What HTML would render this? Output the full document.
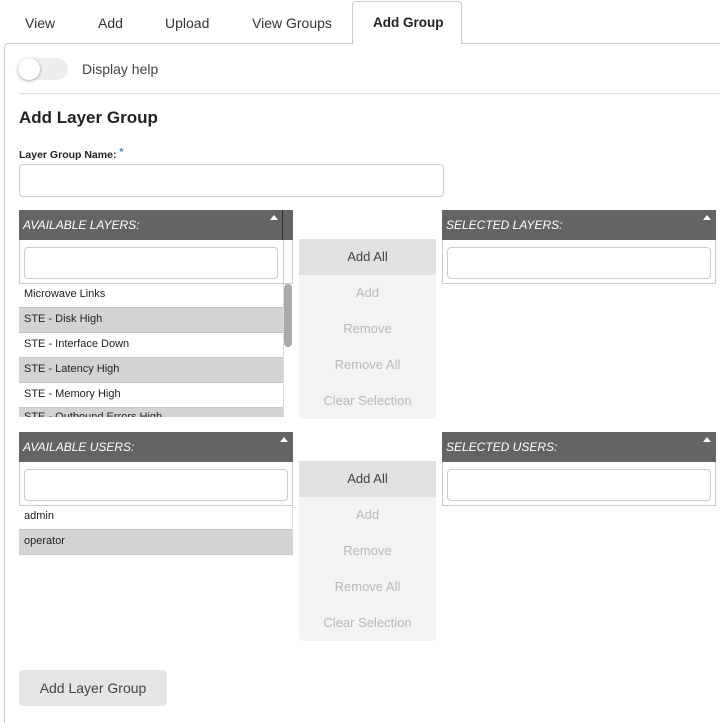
<!DOCTYPE html>
<html><head><style>
*{box-sizing:border-box;margin:0;padding:0}
body{width:720px;height:709px;background:#fff;font-family:"Liberation Sans",sans-serif;position:relative;overflow:hidden;color:#333}
.a{position:absolute}
.tab{position:absolute;top:15px;font-size:14px;color:#333}
.hdr{position:absolute;background:#646464;color:#fff;font-style:italic;font-size:12px;padding:8px 4px;height:31px}
.tri{position:absolute;top:5px;width:0;height:0;border-left:4px solid transparent;border-right:4px solid transparent;border-bottom:5px solid #fff}
.box{position:absolute;border:1px solid #ccc;border-top:none;background:#fff}
.inp{position:absolute;border:1px solid #ccc;border-radius:4px;background:#fff}
.item{position:absolute;left:19px;width:264px;height:25px;font-size:11px;padding:5px 5px;border-bottom:1px solid #c8c8c8;color:#222}
.g{background:#d3d3d3}
.btns{position:absolute;left:299px;width:137px;background:#f2f3f3;border-radius:0 0 4px 4px}
.btns div{height:36px;text-align:center;font-size:13px;line-height:36px;color:#b9b9b9}
.btns div:first-child{background:#e0e1e3;color:#444}
</style></head><body>
<div class="tab" style="left:25px">View</div>
<div class="tab" style="left:98px">Add</div>
<div class="tab" style="left:165px">Upload</div>
<div class="tab" style="left:252px">View Groups</div>
<div class="a" style="left:352px;top:1px;width:110px;height:43px;border:1px solid #ccc;border-bottom:none;border-radius:4px 4px 0 0;background:#fff;z-index:2"></div>
<div class="tab" style="left:373px;font-weight:bold;z-index:3;color:#222;font-size:13.5px">Add Group</div>
<div class="a" style="left:4px;top:43px;width:716px;height:680px;border-left:1px solid #ccc;border-top:1px solid #ccc;border-radius:4px 0 0 0"></div>
<div class="a" style="left:18px;top:58px;width:50px;height:22px;border-radius:11px;background:#eee"></div>
<div class="a" style="left:18px;top:58px;width:22px;height:22px;border-radius:11px;background:#fff;box-shadow:0 1px 3px rgba(0,0,0,.35)"></div>
<div class="a" style="left:82px;top:61px;font-size:14px;color:#444">Display help</div>
<div class="a" style="left:19px;top:93px;width:701px;height:1px;background:#ddd"></div>
<div class="a" style="left:19px;top:108px;font-size:17px;font-weight:bold;color:#222">Add Layer Group</div>
<div class="a" style="left:19px;top:146px;font-size:10.5px;font-weight:bold;color:#222">Layer Group Name:<span style="color:#3a8fd8;vertical-align:3px"> *</span></div>
<div class="inp" style="left:19px;top:164px;width:425px;height:33px"></div>

<div class="hdr" style="left:19px;top:210px;width:274px">AVAILABLE LAYERS:<div class="tri" style="left:251px"></div><div class="a" style="left:263px;top:0;width:1px;height:31px;background:#333"></div></div>
<div class="box" style="left:19px;top:240px;width:274px;height:44px"></div>
<div class="a" style="left:283px;top:240px;width:1px;height:44px;background:#ccc"></div>
<div class="inp" style="left:24px;top:247px;width:254px;height:32px"></div>
<div class="item" style="top:283px">Microwave Links</div>
<div class="item g" style="top:308px">STE - Disk High</div>
<div class="item" style="top:333px">STE - Interface Down</div>
<div class="item g" style="top:358px">STE - Latency High</div>
<div class="item" style="top:383px">STE - Memory High</div>
<div class="a" style="left:19px;top:408px;width:264px;height:9px;overflow:hidden;background:#d3d3d3"><div style="font-size:11px;padding:3px 5px;color:#222">STE - Outbound Errors High</div></div>
<div class="a" style="left:283px;top:284px;width:10px;height:133px;background:#fff;border-left:1px dotted #bbb"></div>
<div class="a" style="left:284px;top:284px;width:8px;height:63px;background:#aaa;border-radius:4px"></div>
<div class="btns" style="top:239px"><div>Add All</div><div>Add</div><div>Remove</div><div>Remove All</div><div>Clear Selection</div></div>
<div class="hdr" style="left:442px;top:210px;width:274px">SELECTED LAYERS:<div class="tri" style="left:261px"></div></div>
<div class="box" style="left:442px;top:240px;width:274px;height:44px"></div>
<div class="inp" style="left:447px;top:247px;width:264px;height:32px"></div>

<div class="hdr" style="left:19px;top:432px;width:274px">AVAILABLE USERS:<div class="tri" style="left:261px"></div></div>
<div class="box" style="left:19px;top:462px;width:274px;height:44px"></div>
<div class="inp" style="left:24px;top:469px;width:264px;height:32px"></div>
<div class="item" style="top:505px;width:274px;border-right:1px dotted #bbb">admin</div>
<div class="item g" style="top:530px;width:274px">operator</div>
<div class="btns" style="top:461px"><div>Add All</div><div>Add</div><div>Remove</div><div>Remove All</div><div>Clear Selection</div></div>
<div class="hdr" style="left:442px;top:432px;width:274px">SELECTED USERS:<div class="tri" style="left:261px"></div></div>
<div class="box" style="left:442px;top:462px;width:274px;height:44px"></div>
<div class="inp" style="left:447px;top:469px;width:264px;height:32px"></div>

<div class="a" style="left:19px;top:670px;width:148px;height:36px;background:#e4e5e6;border-radius:4px;text-align:center;line-height:36px;font-size:14px;color:#444">Add Layer Group</div>
</body></html>
